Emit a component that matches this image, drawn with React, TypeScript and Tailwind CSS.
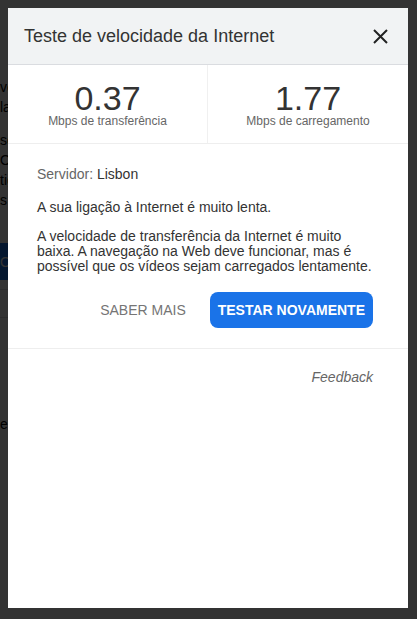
import React from 'react';

const font = "font-['Liberation_Sans',Arial,sans-serif]";

// page behind the modal, only a thin strip of it stays visible
const BackgroundPage = () => (
    <div className="w-2 overflow-hidden text-[14px] leading-5 text-black whitespace-nowrap">
        <div className="pt-[77px]">
            <p>ve</p>
            <p>la</p>
        </div>
        <div className="mt-[13px]">
            <p>se</p>
            <p>O</p>
            <p>tig</p>
            <p>s</p>
        </div>
        <div className="mt-[33px] flex h-[37px] items-center bg-[#1a73e8] text-white">
            <span>O</span>
        </div>
        <div className="mt-[9px] border-t border-[#dadce0]" />
        <div className="mt-[27px] border-t border-[#dadce0]" />
        <p className="mt-[96px]">e</p>
    </div>
);

const Stat = ({ value, label, divider }: { value: string; label: string; divider?: boolean }) => (
    <div className={`flex flex-col items-center pt-4 pb-4 ${divider ? 'border-r border-[#f0f0f0]' : ''}`}>
        <span className="text-[34px] leading-[34px] text-[#333]">{value}</span>
        <span className="text-[12px] leading-[12px] text-[#666]">{label}</span>
    </div>
);

export default function App() {
    return (
        <div className={`relative h-[619px] w-[417px] overflow-hidden bg-white ${font}`}>
            <BackgroundPage />
            <div className="absolute inset-0 bg-black/80" />

            <div className="absolute left-2 top-2 flex h-[600px] w-[400px] flex-col bg-white">
                <div className="flex h-[57px] items-center justify-between border-b border-[#dadce0] bg-[#f1f3f4] pl-4 pr-5">
                    <h2 className="text-[18px] leading-none text-[#333]">Teste de velocidade da Internet</h2>
                    <button className="block text-[#222]" aria-label="Fechar">
                        <svg width="15" height="15" viewBox="0 0 15 15" fill="none">
                            <path d="M1 1L14 14M14 1L1 14" stroke="currentColor" strokeWidth="2" />
                        </svg>
                    </button>
                </div>

                <div className="grid grid-cols-2 border-b border-[#eeeeee]">
                    <Stat value="0.37" label="Mbps de transferência" divider />
                    <Stat value="1.77" label="Mbps de carregamento" />
                </div>

                <div className="pl-[29px] pr-[35px] pt-[23px] text-[14px] leading-[15px] text-[#333]">
                    <p>
                        <span className="text-[#666]">Servidor: </span>Lisbon
                    </p>
                    <p className="mt-[18px]">A sua ligação à Internet é muito lenta.</p>
                    <p className="mt-[14px] mr-[-6px]">
                        A velocidade de transferência da Internet é muito baixa. A navegação na Web deve funcionar, mas é
                        possível que os vídeos sejam carregados lentamente.
                    </p>
                    <div className="mt-[18px] flex justify-end gap-4">
                        <button className="flex h-9 items-center px-2 text-[14px] text-[#757575]">SABER MAIS</button>
                        <button className="flex h-9 items-center rounded-lg bg-[#1a73e8] px-2 text-[14px] font-bold text-white">
                            TESTAR NOVAMENTE
                        </button>
                    </div>
                </div>

                <div className="mt-5 h-px bg-[#eeeeee]" />

                <div className="pr-[35px] pt-[21px] text-right text-[14px] leading-[15px] italic text-[#666]">
                    Feedback
                </div>
            </div>
        </div>
    );
}
